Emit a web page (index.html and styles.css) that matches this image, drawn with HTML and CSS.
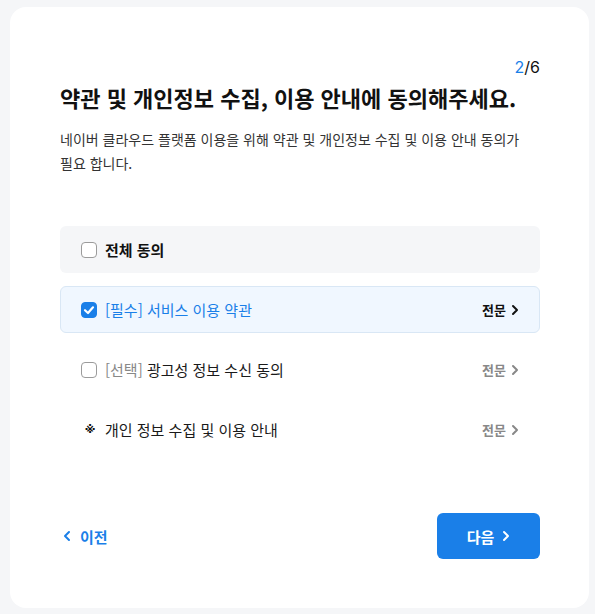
FILE: index.html
```html
<!DOCTYPE html>
<html lang="ko">
<head>
<meta charset="utf-8">
<link rel="stylesheet" href="styles.css">
</head>
<body>
<div class="card">
  <div class="step"><span class="step-cur">2</span>/6</div>
  <h1 class="title">약관 및 개인정보 수집, 이용 안내에 동의해주세요.</h1>
  <p class="desc">네이버 클라우드 플랫폼 이용을 위해 약관 및 개인정보 수집 및 이용 안내 동의가 필요 합니다.</p>

  <div class="list">
    <div class="row row-all">
      <span class="check"></span>
      <span class="label label-bold">전체 동의</span>
    </div>
    <div class="row row-on">
      <span class="check check-on">
        <svg width="16" height="16" viewBox="0 0 16 16"><polyline points="4,8.2 7,11 12,5.3" fill="none" stroke="#fff" stroke-width="2.2" stroke-linecap="round" stroke-linejoin="round"/></svg>
      </span>
      <span class="label label-blue">[필수] 서비스 이용 약관</span>
      <span class="more more-dark">전문
        <svg width="8" height="12" viewBox="0 0 8 12"><polyline points="2,2 6,6 2,10" fill="none" stroke="currentColor" stroke-width="2" stroke-linecap="round" stroke-linejoin="round"/></svg>
      </span>
    </div>
    <div class="row">
      <span class="check"></span>
      <span class="label"><span class="tag">[선택]</span> 광고성 정보 수신 동의</span>
      <span class="more">전문
        <svg width="8" height="12" viewBox="0 0 8 12"><polyline points="2,2 6,6 2,10" fill="none" stroke="currentColor" stroke-width="2" stroke-linecap="round" stroke-linejoin="round"/></svg>
      </span>
    </div>
    <div class="row">
      <span class="mark">※</span>
      <span class="label">개인 정보 수집 및 이용 안내</span>
      <span class="more">전문
        <svg width="8" height="12" viewBox="0 0 8 12"><polyline points="2,2 6,6 2,10" fill="none" stroke="currentColor" stroke-width="2" stroke-linecap="round" stroke-linejoin="round"/></svg>
      </span>
    </div>
  </div>

  <div class="footer">
    <a class="prev">
      <svg width="8" height="12" viewBox="0 0 8 12"><polyline points="6,2 2,6 6,10" fill="none" stroke="currentColor" stroke-width="2" stroke-linecap="round" stroke-linejoin="round"/></svg>
      이전
    </a>
    <button class="next">다음
      <svg width="8" height="12" viewBox="0 0 8 12"><polyline points="2,2 6,6 2,10" fill="none" stroke="currentColor" stroke-width="2" stroke-linecap="round" stroke-linejoin="round"/></svg>
    </button>
  </div>
</div>
</body>
</html>
```

FILE: styles.css
```css
* { box-sizing: border-box; }

html, body {
  margin: 0;
  background: #f5f6f8;
}

body {
  padding: 7px 6px 6px 10px;
  font-family: "Noto Sans CJK KR", "Noto Sans", sans-serif;
  color: #222;
}

.card {
  background: #fff;
  border-radius: 16px;
  height: 601px;
  padding: 50px 49px 49px 50px;
  display: flex;
  flex-direction: column;
}

.step {
  text-align: right;
  font-size: 16px;
  line-height: 20px;
  color: #111;
  font-family: "Inter", "Noto Sans CJK KR", sans-serif;
}

.step-cur { color: #1a7fe8; }

.title {
  margin: 6px 0 0;
  font-size: 22px;
  line-height: 28px;
  font-weight: 700;
  color: #111;
  letter-spacing: 0;
  white-space: nowrap;
}

.desc {
  margin: 16px 0 0;
  font-size: 14px;
  line-height: 24px;
  color: #333;
  word-break: keep-all;
}

.list {
  margin-top: 51px;
  display: flex;
  flex-direction: column;
  gap: 13px;
}

.row {
  height: 47px;
  display: flex;
  align-items: center;
  padding: 0 20px;
  border-radius: 6px;
  border: 1px solid transparent;
  font-size: 15px;
}

.row-all { background: #f5f6f8; }

.row-on {
  background: #f0f7ff;
  border-color: #d9e7f5;
}

.check {
  width: 16px;
  height: 16px;
  border: 1.5px solid #9b9b9b;
  border-radius: 4px;
  background: #fff;
  flex: none;
  margin-right: 8px;
  display: flex;
  align-items: center;
  justify-content: center;
}

.check-on {
  background: #1a7fe8;
  border-color: #1a7fe8;
}

.check-on svg { flex: none; }

.mark {
  width: 16px;
  margin-right: 8px;
  padding-left: 2px;
  text-align: center;
  font-family: "DejaVu Sans", sans-serif;
  font-size: 11px;
  font-weight: 700;
  color: #111;
  line-height: 1;
}

.label {
  flex: 1;
  color: #1a1a1a;
}

.label-bold { font-weight: 700; color: #111; }
.label-blue { color: #1a7fe8; }
.tag { color: #888; }

.more {
  display: flex;
  align-items: center;
  gap: 5px;
  font-size: 13px;
  color: #888;
  font-weight: 700;
}

.more-dark { color: #111; }

.footer {
  margin-top: auto;
  display: flex;
  align-items: center;
  justify-content: space-between;
}

.prev {
  display: flex;
  align-items: center;
  gap: 9px;
  padding-left: 3px;
  font-size: 15px;
  font-weight: 700;
  color: #1a7fe8;
}

.next {
  width: 103px;
  height: 46px;
  border: none;
  border-radius: 6px;
  background: #1a7fe8;
  color: #fff;
  font-family: inherit;
  font-size: 15px;
  font-weight: 700;
  display: flex;
  align-items: center;
  justify-content: center;
  gap: 8px;
  padding: 0;
}
```
